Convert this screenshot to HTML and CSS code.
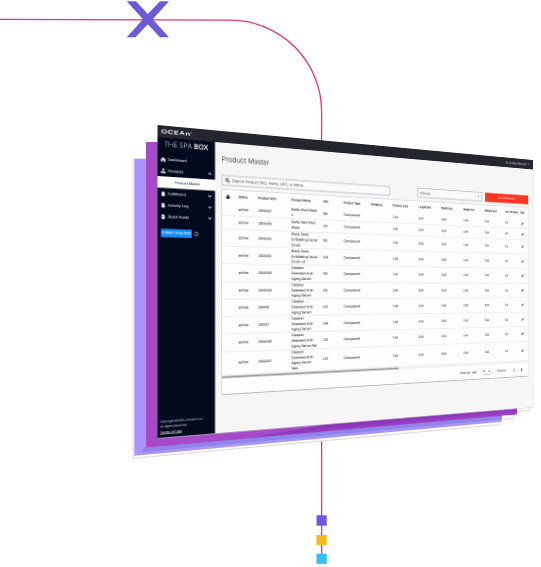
FILE: index.html
```html
<!DOCTYPE html>
<html lang="en">
<head>
<meta charset="utf-8">
<title>Product Master</title>
<link rel="stylesheet" href="styles.css">
</head>
<body>
<svg class="backdrop" viewBox="0 0 541 567" width="541" height="567">
  <defs>
    <linearGradient id="violet" x1="330" y1="424" x2="331" y2="434" gradientUnits="userSpaceOnUse">
      <stop offset="0" stop-color="#8430b0"/><stop offset="1" stop-color="#a546cb"/>
    </linearGradient>
  </defs>
  <path class="wire" d="M0 19.4 L230 20.2 A91.5 91.5 0 0 1 321.6 112 V145 M321.6 435 V556"/>
  <path class="cross" d="M126.7 1.3H136L147.8 14 160 1.3H169L152.7 19.2 169 37.2H160L147.8 24.3 135.6 37.2H126.7L143 19.2Z"/>
  <path fill="#fff" stroke="#dedede" stroke-width="1.2" d="M133 159V458.3L499 424.6V421M502 419.5L514 418.3V414.5M517 411.3L530 410.2V407"/>
  <path fill="#a995fa" d="M134.3 158.7H160V445L501.7 412V421.8L134.3 455.7Z"/>
  <path fill="#9183ec" d="M143 454.8V447.5L501.7 413V419.3L143 452Z"/>
  <path fill="#a54bc8" d="M146 142H170V445L146 447.2Z"/>
  <path fill="url(#violet)" d="M157.5 436L517 405V414.4L157.5 446.2Z"/>
  <path fill="#a54bc8" d="M146 440L157.5 438.5 330 424 250 438 146 447.2Z"/>
  <path fill="#6c5ad8" d="M316.5 515.3h10.2v10.4h-10.2z"/>
  <path fill="#f4b91d" d="M316.5 535h10.2v10h-10.2z"/>
  <path fill="#2fc1f2" d="M316.5 553.7h10.2v10.2h-10.2z"/>
</svg>

<div class="plane"><div class="window">
  <header class="topbar">
    <div class="logo">OCE<span class="peak">A</span>n<sup>x</sup></div>
    <div class="user">Hi Audrey Barrow<i class="caret"></i></div>
  </header>
  <div class="body">
    <nav class="sidebar">
      <div class="brand">THE SPA <b>BOX</b></div>
      <div class="item"><svg viewBox="0 0 10 10"><path d="M5 0L0 4.5V10H3.5V6H6.5V10H10V4.5Z"/></svg>Dashboard</div>
      <div class="item"><svg viewBox="0 0 10 10"><path d="M3 0h4v4H3zM0 6h4.4v4H0zM5.6 6H10v4H5.6zM4.5 4h1v3h-1z"/></svg>Products<svg class="chev up" viewBox="0 0 10 6"><path d="M1 5L5 1 9 5"/></svg></div>
      <div class="item sub">Product Master</div>
      <div class="item"><svg viewBox="0 0 10 10"><path d="M1.5 1H3.5V0H6.5V1H8.5V10H1.5Z"/></svg>Fulfillment<svg class="chev" viewBox="0 0 10 6"><path d="M1 1L5 5 9 1"/></svg></div>
      <div class="item"><svg viewBox="0 0 10 10"><path d="M1.5 0H6L8.5 2.5V10H1.5Z"/><path fill="#030a1e" d="M3 4.5h3v1H3z"/></svg>Activity Log<svg class="chev" viewBox="0 0 10 6"><path d="M1 1L5 5 9 1"/></svg></div>
      <div class="item"><svg viewBox="0 0 10 10"><path d="M1.5 0H6L8.5 2.5V10H1.5Z"/><path fill="#030a1e" d="M4 4h2v2H4z"/></svg>Quick Guide<svg class="chev" viewBox="0 0 10 6"><path d="M1 1L5 5 9 1"/></svg></div>
      <div class="request"><span class="submit">SUBMIT REQUEST</span><span class="help">?</span></div>
      <footer class="legal">Copyright ©2020, OceanX LLC.<br>All Rights Reserved<br><u>Terms of Use</u></footer>
    </nav>
    <main class="main">
      <h1>Product Master</h1>
      <div class="tools">
        <div class="search"><svg viewBox="0 0 10 10"><circle cx="4" cy="4" r="3"/><path d="M6.2 6.2L9.3 9.3"/></svg>Search Product SKU, Name, UPC, or Notes</div>
        <div class="select">Actions<i class="caret"></i></div>
        <div class="add">ADD PRODUCT</div>
      </div>
      <section class="card">
        <div class="row head"><span><svg class="lock" viewBox="0 0 8 10"><path d="M1 4V3a3 3 0 0 1 6 0V4H8V10H0V4ZM2.4 4H5.6V3a1.6 1.6 0 0 0-3.2 0Z"/></svg></span><span>Status</span><span>Product SKU</span><span>Product Name</span><span>UPC</span><span>Product Type</span><span>Category</span><span>Product Cost</span><span>Length (in)</span><span>Width (in)</span><span>Height (in)</span><span>Weight (oz)</span><span>Unit of Meas</span><span>Edit</span></div>
        <div id="rows"></div>
        <div class="scroll"><div class="thumb"></div></div>
        <div class="pager"><span class="per">Rows per page:</span><span class="size">10<i class="caret"></i></span><span class="range">1-10 of 16</span><svg viewBox="0 0 6 10"><path d="M5 1L1 5 5 9"/></svg><span class="page">1</span><svg class="next" viewBox="0 0 6 10"><path d="M1 1L5 5 1 9"/></svg></div>
      </section>
    </main>
  </div>
</div></div>
<script src="rows.js"></script>
</body>
</html>
```
FILE: rows.js
```js
const products = [
  ["2800007", "Baltic Mud Mask<br>v", "109"],
  ["2800056", "Baltic New Mud<br>Mask", "207"],
  ["2800003", "Black Sand<br>Exfoliating Facial<br>Scrub", "105"],
  ["2800052", "Black Sand<br>Exfoliating Facial<br>Scrub v2", "200"],
  ["2800008", "Caspian<br>Seaweed Anti-<br>Aging Serum", "130"],
  ["2800029", "Caspian<br>Seaweed Anti-<br>Aging Serum", "215"],
  ["280010", "Caspian<br>Seaweed Anti-<br>Aging Serum", "202"],
  ["280017", "Caspian<br>Seaweed Anti-<br>Aging Serum", "246"],
  ["2800048", "Caspian<br>Seaweed Anti-<br>Aging Serum Bal", "226"],
  ["2800047", "Caspian<br>Seaweed Anti-<br>Aging Serum<br>New", "228"]
];
const pencil = '<svg class="pencil" viewBox="0 0 8 8"><path d="M0 8L.6 5.4 6 0 8 2 2.6 7.4Z"/></svg>';
document.getElementById("rows").innerHTML = products.map(([sku, name, upc]) =>
  `<div class="row"><span></span><span class="status">active</span><span class="num">${sku}</span><span>${name}</span><span class="num">${upc}</span><span>Component</span><span></span><span class="num">1.00</span><span class="num">2.00</span><span class="num">2.00</span><span class="num">2.00</span><span class="num">1.00</span><span class="num">EA</span><span>${pencil}</span></div>`
).join("");
```
FILE: styles.css
```css
* { box-sizing: border-box; }
body { margin: 0; width: 541px; height: 567px; overflow: hidden; background: #fff; position: relative; font-family: Inter, "Open Sans", sans-serif; text-rendering: geometricPrecision; }
.backdrop { display: block; }
.wire { fill: none; stroke: #e0357f; stroke-width: 1.3; }
.cross { fill: #6c5ad8; }

/* The plane tilts the window in perspective; the window itself is laid out at double size. */
.plane {
  position: absolute; left: 0; top: 0; width: 476px; height: 313px;
  transform-origin: 0 0;
  transform: matrix3d(1.0875, 0.16334, 0, 0.00056134, 0, 1, 0, 0, 0, 0, 1, 0, 157.5, 125, 0, 1);
  filter: blur(.25px);
}
.window {
  width: 952px; height: 626px;
  display: flex; flex-direction: column; background: #f6f6f7; color: #222;
  transform-origin: 0 0; transform: scale(.5);
  box-shadow: 0 0 0 1px rgba(200, 200, 205, .6);
}
.topbar { height: 24px; flex: none; display: flex; align-items: center; justify-content: space-between; background: #25252e; color: #fff; padding: 0 11px 0 7px; }
.logo { font-size: 11.5px; font-weight: 600; line-height: 12px; transform: scaleX(1.45); transform-origin: 0 50%; letter-spacing: .4px; white-space: nowrap; }
.logo sup { font-size: 4px; vertical-align: 5px; line-height: 0; }
.peak { background: linear-gradient(#fff 62%, #2b9ce8 62%); -webkit-background-clip: text; background-clip: text; color: transparent; }
.user { font-size: 7.8px; display: flex; align-items: center; gap: 5px; color: #d8d8dc; }
.caret { display: inline-block; border: 2.5px solid transparent; border-top: 3.5px solid currentColor; border-bottom: 0; }

.body { flex: 1; display: flex; min-height: 0; }
.sidebar { width: 119px; background: #030a1e; color: #fff; display: flex; flex-direction: column; }
.brand { height: 32px; padding: 2px 0 0 14px; font: 300 14.8px/22px "Open Sans", sans-serif; white-space: nowrap; }
.brand b { font-weight: 600; }
.item { height: 23px; display: flex; align-items: center; padding: 0 7px; gap: 5px; font-size: 7.4px; font-weight: 500; color: #eceef4; }
.item svg { width: 9px; height: 10px; fill: #fff; }
.item .chev { width: 8px; height: 5px; margin-left: auto; fill: none; stroke: #fff; stroke-width: 1.8; }
.item.sub { background: #fff; color: #35405c; padding-left: 35px; font-size: 7.2px; }
.request { display: flex; align-items: center; gap: 5px; padding: 13px 0 0 7px; }
.submit { width: 63px; height: 17px; line-height: 17px; background: #148cf5; color: #e2f1ff; font-size: 6.5px; font-weight: 600; text-align: center; letter-spacing: .2px; }
.help { width: 9px; height: 9px; border: 1px solid #dde; border-radius: 50%; font-size: 6px; line-height: 7px; text-align: center; }
.legal { margin-top: auto; padding: 0 0 4px 5px; font-size: 6px; line-height: 10.5px; color: #d6dae4; white-space: nowrap; }
.legal u { font-size: 7px; color: #fff; }

.main { flex: 1; padding: 24px 15px 0 14px; }
h1 { margin: 0; font-size: 14.9px; font-weight: 300; line-height: 20px; color: #111; }
.tools { display: grid; grid-template-columns: 403px 73px 186px 9px 133px; margin-top: 22px; height: 23px; align-items: center; }
.search, .select { height: 22px; border: 2px solid #c0c0c3; background: #fafafa; display: flex; align-items: center; color: #444; font-size: 8px; }
.search { padding-left: 6px; gap: 5px; }
.search svg { width: 10px; height: 10px; fill: none; stroke: #222; stroke-width: 1.4; }
.select { grid-column: 3; padding: 0 7px 0 5px; justify-content: space-between; height: 23px; }
.add { grid-column: 5; height: 22px; line-height: 22px; background: #fa3620; color: #ffd4ca; font-size: 7.6px; font-weight: 500; text-align: center; }
.card { height: 427px; margin-top: 8px; border: 1px solid #c4c4c7; border-bottom: 2px solid #b8b8bb; background: #fdfdfd; }
.row { display: grid; grid-template-columns: 36px 44px 76px 75px 51px 70px 57px 69px 64px 63px 64px 62px 48px 1fr; align-items: center; border-bottom: 1px solid #dcdcde; font-size: 7.7px; line-height: 11.7px; padding-top: .4px; min-height: 27px; white-space: nowrap; color: #000; }
.row.head { height: 26px; font-size: 6.6px; font-weight: 600; border: 0; }
.row > :first-child { padding-left: 9px; }
.num { font-size: 7.2px; letter-spacing: -.2px; }
.lock { width: 8px; height: 9px; display: block; fill: #222; }
.pencil { width: 7px; height: 7px; display: block; margin-left: 3px; fill: #333; }
.scroll { height: 4px; margin-top: 2px; background: #ededee; }
.thumb { width: 425px; height: 4px; background: #999; }
.pager { height: 34px; display: flex; align-items: center; justify-content: flex-end; padding-right: 17px; font-size: 6.8px; color: #111; }
.size { margin-left: 16px; width: 21px; display: flex; align-items: center; justify-content: space-between; border-bottom: 1px solid #999; line-height: 14px; }
.range { margin: 0 24px 0 21px; letter-spacing: -.3px; }
.pager svg { width: 6px; height: 12px; fill: none; stroke: #666; stroke-width: 1.2; }
.pager .next { stroke: #111; stroke-width: 1.7; }
.page { margin: 0 7px; }
```
